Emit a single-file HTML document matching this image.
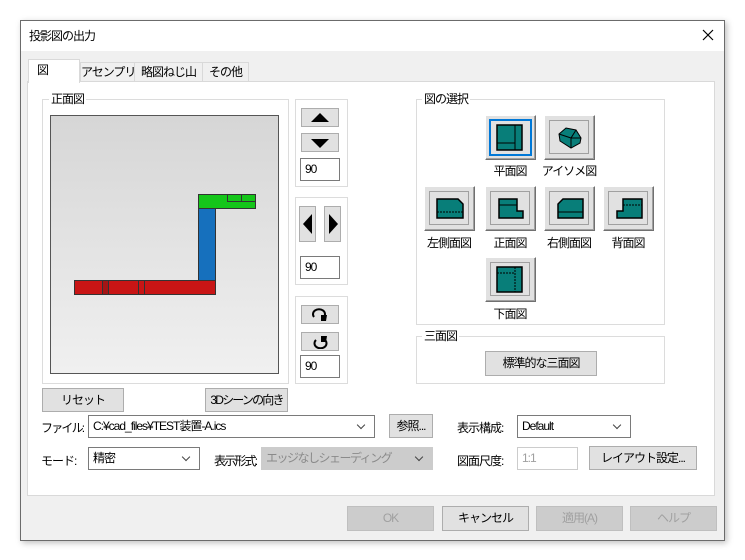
<!DOCTYPE html>
<html><head><meta charset="utf-8"><style>
*{box-sizing:border-box;margin:0;padding:0}
body{width:745px;height:560px;background:#fff;position:relative;overflow:hidden;font-family:"Liberation Sans","Noto Sans CJK JP",sans-serif;font-size:12px;color:#000;letter-spacing:-1px;white-space:nowrap}
.a{position:absolute}
.win{left:20px;top:20px;width:705px;height:521px;border:1px solid #6b6b6b;background:#f0f0f0;box-shadow:2px 2px 6px rgba(0,0,0,.25)}
.tb{left:21px;top:21px;width:703px;height:30px;background:#fff}
.grp{border:1px solid #dcdcdc}
.gl{background:#fff;padding:0 2px;font-size:12px;line-height:14px}
.btn{background:#e1e1e1;border:1px solid #adadad;text-align:center;font-size:12px;overflow:hidden}
.dis{color:#a0a0a0;background:#cccccc;border-color:#bfbfbf}
.inp{background:#fff;border:1px solid #7a7a7a;padding-left:4px;font-size:12px}
.vb{width:51px;height:45px;background:#e1e1e1;border:1px solid;border-color:#fff #707070 #707070 #fff;box-shadow:inset -1px -1px 0 #a0a0a0}
.vb .in{position:absolute;left:4px;top:4px;width:40px;height:34px;border:1px solid #a0a0a0}
.lbl{font-size:12px;text-align:center;width:80px}
.cb{background:#fff;border:1px solid #7a7a7a;padding-left:4px;line-height:21px;overflow:hidden}
.cb:after{content:"";position:absolute;right:10px;top:6px;width:5px;height:5px;border-right:1px solid #444;border-bottom:1px solid #444;transform:rotate(45deg)}
.tab{background:#f0f0f0;border:1px solid #d9d9d9;line-height:18px;text-align:center;height:20px;top:62px}
</style></head><body>
<div class="a win"></div>
<div class="a tb"></div>
<div class="a" style="left:29px;top:27px;font-size:12px">投影図の出力</div>
<svg class="a" style="left:702px;top:29px" width="12" height="12"><path d="M1 1L11 11M11 1L1 11" stroke="#000" stroke-width="1.2"/></svg>

<div class="a" style="left:27px;top:81px;width:688px;height:415px;background:#fff;border:1px solid #d9d9d9"></div>
<div class="a tab" style="left:80px;width:55px">アセンプリ</div>
<div class="a tab" style="left:134px;width:69px">略図ねじ山</div>
<div class="a tab" style="left:202px;width:47px">その他</div>
<div class="a" style="left:28px;top:59px;width:52px;height:24px;background:#fff;border:1px solid #d9d9d9;border-bottom:none;padding-left:8px;line-height:20px">図</div>

<div class="a grp" style="left:42px;top:99px;width:247px;height:285px"></div>
<div class="a gl" style="left:49px;top:92px">正面図</div>
<div class="a" style="left:50px;top:115px;width:229px;height:259px;border:1px solid #555;background:linear-gradient(#d6d6d6,#f0f0f0)"></div>
<div class="a" style="left:198px;top:194px;width:58px;height:15px;background:#15c61a;border:1px solid #333"></div>
<div class="a" style="left:227px;top:194px;width:29px;height:8px;border:1px solid #333"></div>
<div class="a" style="left:241px;top:194px;width:1px;height:8px;background:#333"></div>
<div class="a" style="left:198px;top:208px;width:18px;height:73px;background:#1670bd;border:1px solid #333"></div>
<div class="a" style="left:74px;top:280px;width:142px;height:15px;background:#c81515;border:1px solid #333"></div>
<div class="a" style="left:102px;top:280px;width:7px;height:15px;background:#a51515;border:1px solid #333"></div>
<div class="a" style="left:138px;top:280px;width:7px;height:15px;border:1px solid #333"></div>

<div class="a grp" style="left:295px;top:99px;width:53px;height:88px"></div>
<div class="a btn" style="left:301px;top:108px;width:38px;height:19px"><svg width="20" height="12" style="margin-top:3px"><path d="M1 10L10 1L19 10Z"/></svg></div>
<div class="a btn" style="left:301px;top:133px;width:38px;height:19px"><svg width="20" height="12" style="margin-top:3px"><path d="M1 2L10 11L19 2Z"/></svg></div>
<div class="a inp" style="left:300px;top:158px;width:40px;height:23px;line-height:21px">90</div>

<div class="a grp" style="left:295px;top:197px;width:53px;height:88px"></div>
<div class="a btn" style="left:299px;top:206px;width:17px;height:36px"><svg width="12" height="20" style="margin-top:7px"><path d="M10 0L1 10L10 20Z"/></svg></div>
<div class="a btn" style="left:324px;top:206px;width:17px;height:36px"><svg width="12" height="20" style="margin-top:7px"><path d="M2 0L11 10L2 20Z"/></svg></div>
<div class="a inp" style="left:300px;top:256px;width:40px;height:23px;line-height:21px">90</div>

<div class="a grp" style="left:295px;top:296px;width:53px;height:88px"></div>
<div class="a btn" style="left:301px;top:305px;width:38px;height:19px"><svg width="18" height="14" style="margin-top:2px"><path d="M3 9A6 5 0 1 1 13 9" fill="none" stroke="#000" stroke-width="2"/><path d="M10 7L16 7L15 13L10 13Z"/></svg></div>
<div class="a btn" style="left:301px;top:332px;width:38px;height:19px"><svg width="18" height="14" style="margin-top:2px"><path d="M5 5A6 5 0 1 0 14 5" fill="none" stroke="#000" stroke-width="2"/><path d="M10 1L16 1L15 7L10 7Z"/></svg></div>
<div class="a inp" style="left:300px;top:355px;width:40px;height:23px;line-height:21px">90</div>

<div class="a btn" style="left:42px;top:388px;width:82px;height:24px;line-height:22px">リセット</div>
<div class="a btn" style="left:205px;top:388px;width:83px;height:24px;line-height:22px;letter-spacing:-1.8px">3Dシーンの向き</div>

<div class="a grp" style="left:416px;top:99px;width:249px;height:226px"></div>
<div class="a gl" style="left:422px;top:92px">図の選択</div>

<div class="a vb" style="left:485px;top:115px"><div class="a" style="left:3px;top:3px;width:43px;height:37px;border:2px solid #0078d7"></div>
<svg class="a" style="left:10px;top:8px" width="30" height="30"><rect x="1" y="1" width="25" height="25" fill="#087e79" stroke="#000" stroke-width="1.5"/><path d="M19 1V26M1 19H19" stroke="#000"/></svg></div>
<div class="a vb" style="left:544px;top:115px"><div class="in"></div>
<svg class="a" style="left:12px;top:10px" width="28" height="24"><path d="M2 8L9 2L19 4L24 12L23 17L14 22L3 15Z" fill="#087e79" stroke="#000"/><path d="M2 8L14 12L19 4M14 12L14 22M14 12L24 12" stroke="#000" fill="none"/></svg></div>
<div class="a lbl" style="left:470px;top:162px">平面図</div>
<div class="a lbl" style="left:529px;top:162px">アイソメ図</div>

<div class="a vb" style="left:424px;top:186px"><div class="in"></div>
<svg class="a" style="left:11px;top:11px" width="30" height="24"><path d="M1 1H22L27 6V20H1Z" fill="#087e79" stroke="#000" stroke-width="1.5"/><path d="M1 14H27" stroke="#000" stroke-dasharray="2 1"/></svg></div>
<div class="a vb" style="left:485px;top:186px"><div class="in"></div>
<svg class="a" style="left:12px;top:11px" width="28" height="24"><path d="M1 1H19V13H25V20H1Z" fill="#087e79" stroke="#000" stroke-width="1.5"/><path d="M1 7H19" stroke="#000"/></svg></div>
<div class="a vb" style="left:544px;top:186px"><div class="in"></div>
<svg class="a" style="left:12px;top:11px" width="28" height="24"><path d="M6 1H26V20H1V6Z" fill="#087e79" stroke="#000" stroke-width="1.5"/><path d="M1 14H26" stroke="#000"/></svg></div>
<div class="a vb" style="left:603px;top:186px"><div class="in"></div>
<svg class="a" style="left:12px;top:11px" width="28" height="24"><path d="M7 1H26V20H1V13H7Z" fill="#087e79" stroke="#000" stroke-width="1.5"/><path d="M7 7H26" stroke="#000" stroke-dasharray="2 1"/></svg></div>
<div class="a lbl" style="left:409px;top:234px">左側面図</div>
<div class="a lbl" style="left:470px;top:234px">正面図</div>
<div class="a lbl" style="left:529px;top:234px">右側面図</div>
<div class="a lbl" style="left:588px;top:234px">背面図</div>

<div class="a vb" style="left:485px;top:257px"><div class="in"></div>
<svg class="a" style="left:10px;top:8px" width="30" height="30"><rect x="1" y="1" width="25" height="25" fill="#087e79" stroke="#000" stroke-width="1.5"/><path d="M19 1V26M1 7H19" stroke="#000" stroke-dasharray="2 1"/></svg></div>
<div class="a lbl" style="left:470px;top:305px">下面図</div>

<div class="a grp" style="left:416px;top:336px;width:249px;height:48px"></div>
<div class="a gl" style="left:422px;top:329px">三面図</div>
<div class="a btn" style="left:485px;top:351px;width:112px;height:25px;line-height:23px">標準的な三面図</div>

<div class="a" style="left:41px;top:419px;letter-spacing:-1.8px">ファイル:</div>
<div class="a cb" style="left:88px;top:415px;width:287px;height:23px">C:¥cad_files¥TEST装置-A.ics</div>
<div class="a btn" style="left:389px;top:414px;width:44px;height:24px;line-height:22px">参照...</div>
<div class="a" style="left:457px;top:419px">表示構成:</div>
<div class="a cb" style="left:517px;top:415px;width:114px;height:23px">Default</div>

<div class="a" style="left:41px;top:452px">モード:</div>
<div class="a cb" style="left:88px;top:447px;width:112px;height:23px">精密</div>
<div class="a" style="left:214px;top:452px;letter-spacing:-1.8px">表示形式:</div>
<div class="a cb" style="left:261px;top:447px;width:172px;height:23px;background:#ccc;border-color:#ccc;color:#8a8a8a;letter-spacing:-1.5px">エッジなしシェーディング</div>
<div class="a" style="left:457px;top:452px">図面尺度:</div>
<div class="a" style="left:517px;top:447px;width:61px;height:23px;border:1px solid #ccc;background:#fff;color:#a0a0a0;padding-left:4px;line-height:21px">1:1</div>
<div class="a btn" style="left:589px;top:446px;width:108px;height:24px;line-height:22px">レイアウト設定...</div>

<div class="a btn dis" style="left:347px;top:506px;width:87px;height:25px;line-height:23px">OK</div>
<div class="a btn" style="left:442px;top:506px;width:87px;height:25px;line-height:23px">キャンセル</div>
<div class="a btn dis" style="left:536px;top:506px;width:87px;height:25px;line-height:23px">適用(A)</div>
<div class="a btn dis" style="left:630px;top:506px;width:87px;height:25px;line-height:23px">ヘルプ</div>
</body></html>
